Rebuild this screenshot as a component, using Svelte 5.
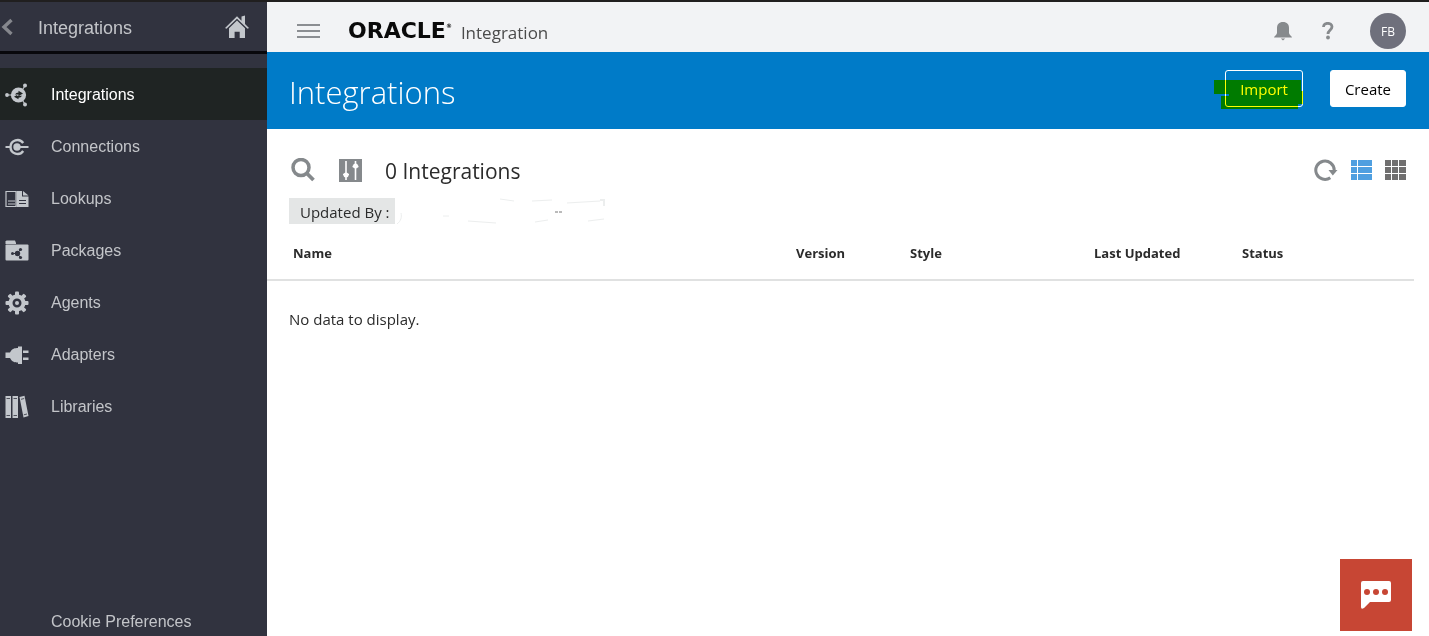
<script>
  const items = [
    { label: 'Integrations', icon: 'integrations' },
    { label: 'Connections', icon: 'connections' },
    { label: 'Lookups', icon: 'lookups' },
    { label: 'Packages', icon: 'packages' },
    { label: 'Agents', icon: 'agents' },
    { label: 'Adapters', icon: 'adapters' },
    { label: 'Libraries', icon: 'libraries' }
  ];
  let active = $state('Integrations');
  const teeth = [0, 45, 90, 135, 180, 225, 270, 315];
  const cells = [0, 7, 14];
</script>

<div class="app">
  <aside class="sidebar">
    <div class="side-head">
      <button class="plain back" aria-label="Back">
        <svg width="14" height="18" viewBox="0 0 14 18"><path d="M11.500 2L4 9l7.500 7" fill="none" stroke="#85878d" stroke-width="3.400" /></svg>
      </button>
      <span class="side-title">Integrations</span>
      <button class="plain home" aria-label="Home">
        <svg width="24" height="24" viewBox="0 0 24 24" fill="#c3c7cc">
          <path d="M0 13L12 1.300l4.500 4.400V1.500L20 .5v8.600L24 13l-1.500.8L12 3.800 1.500 13.800z" />
          <path d="M4 13.200L12 5.600l8 7.600V23h-5.300v-6.300H9.600V23H4z" />
        </svg>
      </button>
    </div>
    <nav>
      {#each items as item}
        <a href="#{item.icon}" class:active={active === item.label} onclick={() => (active = item.label)}>
          <svg class="nav-icon" width="24" height="24" viewBox="0 0 24 24" fill="#c3c7cc">
            {#if item.icon === 'integrations'}
              <circle cx="13.500" cy="12" r="7.600" />
              <path d="M2 12h5M17.500 6.500L20 3M17.500 17.500L20 21" stroke="#c3c7cc" stroke-width="1.200" />
              <circle cx="2" cy="12" r="1.900" /><circle cx="20" cy="2.500" r="2" /><circle cx="20" cy="21.500" r="2" />
              <path d="M10 11.500q1-2 3.500-2V7.800l4.500 2.700-4.500 2.600v-1.600q-2 0-3.500 0zM17 12.700q-1 2-3.500 2v1.600L9 13.800l3-1.800v.7z" fill="#1f2423" />
            {:else if item.icon === 'connections'}
              <path d="M18.200 8A7 7 0 0 0 5.500 12A7 7 0 0 0 18.200 16" fill="none" stroke="#c3c7cc" stroke-width="2.400" />
              <circle cx="12" cy="12" r="3.700" />
              <path d="M.5 12h5M12 12h11.500" stroke="#c3c7cc" stroke-width="2" />
            {:else if item.icon === 'lookups'}
              <path d="M1 4.500h10v15H1z" fill="none" stroke="#c3c7cc" stroke-width="1.200" />
              <path d="M3 14h7M3 17h7" stroke="#c3c7cc" />
              <path d="M11.500 4H17v5.500h6.500V20h-12z" /><path d="M18 4l5.500 4.500H18z" />
              <path d="M14 13.500h7M14 16.500h7" stroke="#31333f" stroke-width="1.200" />
            {:else if item.icon === 'packages'}
              <path d="M1.500 1.500h8.500l1 2.500v1H.5V2.500z" /><rect x=".5" y="5.500" width="23" height="16" rx="1" />
              <g fill="#31333f"><circle cx="12.500" cy="14.500" r="2.700" /><circle cx="7.500" cy="14.500" r="1.500" /><circle cx="15.500" cy="10.500" r="1.600" /><circle cx="15.500" cy="18.500" r="1.600" /></g>
              <path d="M7 14.500h5l3.500-4M12.500 15l3 3.500" fill="none" stroke="#31333f" />
            {:else if item.icon === 'agents'}
              <circle cx="12" cy="12" r="6.500" fill="none" stroke="#c3c7cc" stroke-width="4" />
              {#each teeth as angle}
                <rect x="10" y=".5" width="4" height="5" rx="1" transform="rotate({angle} 12 12)" />
              {/each}
              <circle cx="12" cy="12" r="2" />
            {:else if item.icon === 'adapters'}
              <path d="M.5 9.500h4.500C7 5.500 10 5 13 5V3.500h4V21h-4v-1.500C10 19.500 7 19 5 15H.5zM18 7.500h5.500v2.500H18zM18 14.500h5.500V17H18z" />
            {:else}
              <path d="M.5 1h5.500v22H.5zM7.500 1H13v22H7.500zM14.500 2l5-1.200 4 20.200-5 1.500z" />
              <path d="M1.500 3.500h3.500M1.500 20.500h3.500M8.500 3.500H12M8.500 20.500H12M16 4.300l3.200-.8M18.800 19.800l3.200-.8" stroke="#31333f" stroke-width=".8" />
            {/if}
          </svg>
          <span>{item.label}</span>
        </a>
      {/each}
    </nav>
    <a class="cookie" href="#cookies">Cookie Preferences</a>
  </aside>

  <main>
    <header class="topbar">
      <button class="plain menu" aria-label="Toggle navigation">
        <svg width="23" height="14" viewBox="0 0 23 14"><path d="M0 1h23M0 7h23M0 13h23" stroke="#8b8e92" stroke-width="2" /></svg>
      </button>
      <span class="brand">ORACLE<sup>®</sup></span>
      <span class="product">Integration</span>
      <div class="account">
        <button class="plain" aria-label="Notifications">
          <svg width="18" height="19" viewBox="0 0 18 19" fill="#878a8d"><path d="M9 0c4 0 6 2.500 6 6v5c0 2 3 3 3 4.500H0C0 14 3 13 3 11V6c0-3.500 2-6 6-6zM6.800 16.500h4.400L9 18.500z" /></svg>
        </button>
        <button class="plain help" aria-label="Help">
          <svg width="12" height="18" viewBox="0 0 12 18"><path d="M1.500 5C1.500 0 10 .2 10 4.800c0 3-4 3.400-4 7.200" fill="none" stroke="#878a8d" stroke-width="2.800" /><circle cx="6" cy="15.500" r="1.900" fill="#878a8d" /></svg>
        </button>
        <button class="avatar">FB</button>
      </div>
    </header>

    <section class="banner">
      <h1>Integrations</h1>
      <div class="actions">
        <span class="marked">
          <button class="btn outline">Import</button>
          <svg class="marker" width="90" height="30" viewBox="0 0 90 30"><path d="M0 0h87v11h2v13h-5v5H7V16h8v-2H0z" fill="#ff0" /></svg>
        </span>
        <button class="btn solid">Create</button>
      </div>
    </section>

    <section class="content">
      <div class="tools">
        <button class="plain" aria-label="Search">
          <svg width="24" height="24" viewBox="0 0 24 24" fill="none" stroke="#85898c"><circle cx="10" cy="9.500" r="8" stroke-width="3.500" /><path d="M15.500 15l7 7" stroke-width="3.800" /></svg>
        </button>
        <button class="plain filter" aria-label="Filter">
          <svg width="23" height="23" viewBox="0 0 23 23"><path d="M0 0h23v23H0z" fill="#85898c" /><path d="M7 2v19M16.500 2v19M4 15.500h6M13.500 7.500h6" stroke="#fff" stroke-width="1.600" /><circle cx="7" cy="16" r="2.500" fill="#fff" /><circle cx="16.500" cy="7" r="2.500" fill="#fff" /></svg>
        </button>
        <h2>0 Integrations</h2>
        <div class="views">
          <button class="plain" aria-label="Refresh">
            <svg width="24" height="24" viewBox="0 0 24 24"><path d="M16.300 19.700A9.200 9.200 0 1 1 20.200 12" fill="none" stroke="#85898c" stroke-width="3" /><path d="M14.500 12H23.500L18.800 17.500z" fill="#85898c" /></svg>
          </button>
          <button class="plain" aria-label="List view">
            <svg width="21" height="20" viewBox="0 0 21 20" fill="#4f9fe0">{#each cells as y}<path d="M0 {y}h6v6H0zM7 {y}h14v6H7z" />{/each}</svg>
          </button>
          <button class="plain" aria-label="Grid view">
            <svg width="21" height="20" viewBox="0 0 21 20" fill="#706f6f">{#each cells as y}<path d="M0 {y}h6v6H0zM7 {y}h6v6H7zM14 {y}h7v6h-7z" />{/each}</svg>
          </button>
        </div>
      </div>
      <div class="filters">
        <span class="chip">Updated By :</span>
        <svg width="210" height="26" viewBox="0 0 210 26" fill="none" stroke="#eceeee" aria-hidden="true"><path d="M2 26c4-3 5-7 4-11M105 1l14 2M137 3l20-1M172 5l33-2M73 23l28 2M140 24l13-2M193 23l16-2M48 18h6" /><path d="M205 2h4v6" stroke-width="2" /><path d="M160 14h8" stroke="#777" stroke-dasharray="3 1" /></svg>
      </div>
      <table>
        <colgroup><col /><col class="c-version" /><col class="c-style" /><col class="c-updated" /><col class="c-status" /></colgroup>
        <thead><tr><th>Name</th><th>Version</th><th>Style</th><th>Last Updated</th><th>Status</th></tr></thead>
        <tbody><tr><td colspan="5">No data to display.</td></tr></tbody>
      </table>
    </section>
  </main>

  <button class="chat" aria-label="Chat">
    <svg width="30" height="28" viewBox="0 0 30 28"><path d="M2 0h26q2 0 2 2v17q0 2-2 2H9l-6 6q-3 2-3-1V2Q0 0 2 0z" fill="#fff" /><g fill="#c74634"><circle cx="6" cy="11" r="3" /><circle cx="15" cy="11" r="3" /><circle cx="24" cy="11" r="3" /></g></svg>
  </button>
</div>

<style>
  .app {
    display: flex;
    min-height: 100vh;
    box-sizing: border-box;
    border-top: 2px solid #201f1f;
    background: #fff;
    color: #2b2b2b;
    font-family: "Open Sans", "Noto Sans", sans-serif;
    font-size: 15px;
  }
  button { font: inherit; cursor: pointer; }
  svg { display: block; flex: none; }
  .plain { display: flex; padding: 0; border: 0; background: none; }

  .sidebar {
    display: flex;
    flex-direction: column;
    flex: 0 0 267px;
    background: #31333f;
    color: #c3c5c9;
    font-family: "Liberation Sans", Arial, sans-serif;
    font-size: 16px;
  }
  .side-head {
    display: flex;
    align-items: center;
    height: 49px;
    padding-right: 18px;
    border-bottom: 3px solid #08080c;
    font-size: 18px;
  }
  .side-title { flex: 1; margin-left: 24px; padding-top: 4px; }
  nav { margin-top: 14px; }
  nav a {
    display: flex;
    align-items: center;
    gap: 22px;
    height: 52px;
    box-sizing: border-box;
    padding: 2px 0 0 5px;
    color: inherit;
    text-decoration: none;
  }
  nav a.active { background: #1f2423; color: #fff; }
  .cookie { margin-top: auto; padding: 0 0 4px 51px; line-height: 20px; color: inherit; text-decoration: none; }

  main { flex: 1; min-width: 0; }
  .topbar {
    display: flex;
    align-items: center;
    height: 50px;
    padding: 0 23px 0 30px;
    background: #f2f3f5;
  }
  .menu { margin: 8px 28px 0 0; }
  .brand { padding-top: 7px; color: #0a0a0a; font: bold 22px/24px "DejaVu Sans", sans-serif; }
  .brand sup { font-size: 6px; line-height: 6px; vertical-align: 10px; }
  .product { margin-left: 9px; padding-top: 10px; color: #4b4b4b; font-size: 17px; }
  .account { display: flex; align-items: center; margin-left: auto; padding-top: 8px; }
  .help { margin: 0 36px 0 30px; }
  .avatar {
    width: 36px;
    height: 36px;
    padding: 0;
    border: 0;
    border-radius: 50%;
    background: #6f707c;
    color: #fff;
    font-size: 12px;
  }
  .banner {
    display: flex;
    align-items: center;
    justify-content: space-between;
    height: 77px;
    padding: 0 23px 0 22px;
    background: #007bc8;
    color: #fff;
  }
  h1 { margin: 2px 0 0; font-size: 31px; font-weight: 300; }
  .actions { display: flex; gap: 27px; margin-top: -4px; }
  .marked { position: relative; }
  .marker { position: absolute; top: 10px; left: -11px; mix-blend-mode: multiply; pointer-events: none; }
  .btn {
    height: 37px;
    padding: 0 14px;
    border: 1px solid #fff;
    border-radius: 3px;
    white-space: nowrap;
  }
  .outline { background: none; color: #fff; }
  .solid { background: #fff; color: #000; }

  .tools { display: flex; align-items: center; padding: 27px 23px 0 24px; }
  .filter { margin: 0 23px 0 24px; }
  h2 { margin: 0; padding-top: 2px; font-size: 21px; font-weight: 400; line-height: 26px; }
  .views { display: flex; align-items: center; gap: 13px; margin-left: auto; }
  .filters { display: flex; margin: 14px 22px 0; }
  .chip { padding: 2px 5px 0 11px; background: #e4e6e6; line-height: 24px; }
  table { width: calc(100% - 15px); border-collapse: collapse; table-layout: fixed; }
  .c-version { width: 114px; }
  .c-style { width: 184px; }
  .c-updated { width: 148px; }
  .c-status { width: 198px; }
  th {
    height: 56px;
    box-sizing: border-box;
    padding: 3px 0 0 26px;
    border-bottom: 2px solid #e0e1e1;
    font-size: 13px;
    text-align: left;
  }
  td { padding: 27px 0 0 22px; line-height: 22px; }

  .chat {
    position: fixed;
    right: 17px;
    bottom: 5px;
    display: flex;
    align-items: center;
    justify-content: center;
    width: 72px;
    height: 72px;
    padding: 0;
    border: 0;
    background: #c74634;
  }
</style>
